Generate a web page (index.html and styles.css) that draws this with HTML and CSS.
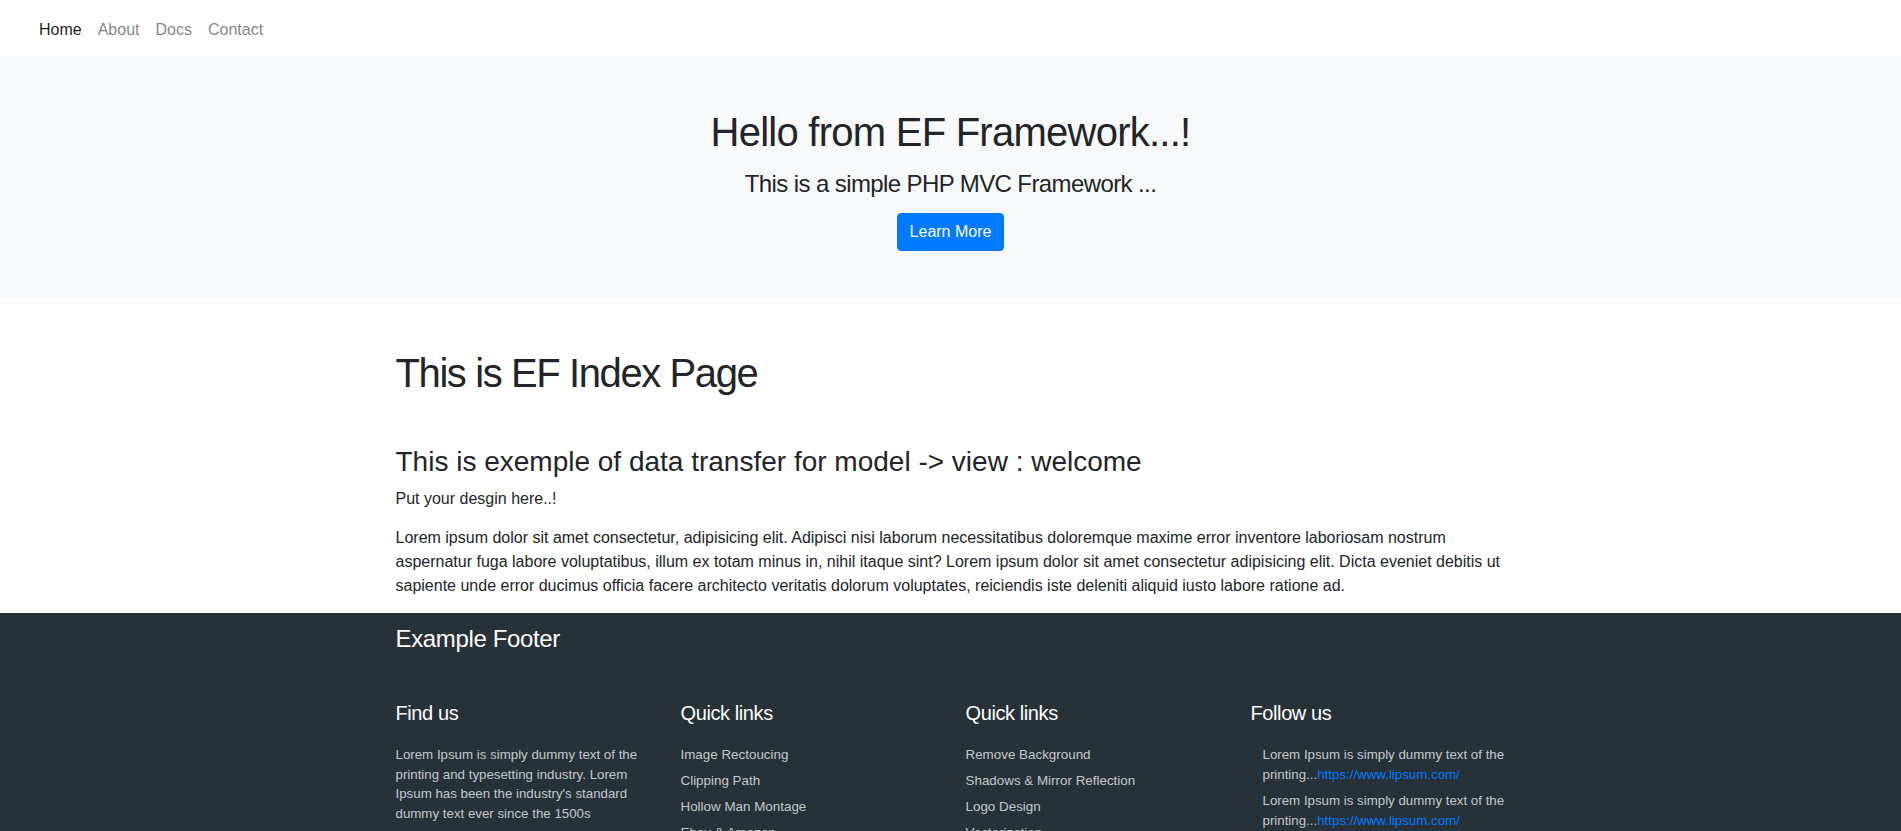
FILE: index.html
```html
<!DOCTYPE html>
<html lang="en">
<head>
<meta charset="utf-8">
<title>EF Framework</title>
<link rel="stylesheet" href="styles.css">
</head>
<body>
<nav class="navbar">
  <div class="navbar-inner">
    <ul class="nav">
      <li><a class="nav-link active" href="#">Home</a></li>
      <li><a class="nav-link" href="#">About</a></li>
      <li><a class="nav-link" href="#">Docs</a></li>
      <li><a class="nav-link" href="#">Contact</a></li>
    </ul>
  </div>
</nav>

<section class="hero">
  <h1 class="hero-title">Hello from EF Framework...!</h1>
  <p class="hero-lead">This is a simple PHP MVC Framework ...</p>
  <a class="btn" href="#">Learn More</a>
</section>

<main class="container">
  <h1 class="page-title">This is EF Index Page</h1>
  <h3 class="section-title">This is exemple of data transfer for model -&gt; view : welcome</h3>
  <p class="intro">Put your desgin here..!</p>
  <p class="body-text">Lorem ipsum dolor sit amet consectetur, adipisicing elit. Adipisci nisi laborum necessitatibus doloremque maxime error inventore laboriosam nostrum aspernatur fuga labore voluptatibus, illum ex totam minus in, nihil itaque sint? Lorem ipsum dolor sit amet consectetur adipisicing elit. Dicta eveniet debitis ut sapiente unde error ducimus officia facere architecto veritatis dolorum voluptates, reiciendis iste deleniti aliquid iusto labore ratione ad.</p>
</main>

<footer class="footer">
  <div class="container">
    <h4 class="footer-title">Example Footer</h4>
    <div class="footer-grid">
      <div class="footer-col">
        <h5 class="col-title">Find us</h5>
        <p class="col-text">Lorem Ipsum is simply dummy text of the printing and typesetting industry. Lorem Ipsum has been the industry's standard dummy text ever since the 1500s</p>
      </div>
      <div class="footer-col">
        <h5 class="col-title">Quick links</h5>
        <ul class="links">
          <li><a href="#">Image Rectoucing</a></li>
          <li><a href="#">Clipping Path</a></li>
          <li><a href="#">Hollow Man Montage</a></li>
          <li><a href="#">Ebay &amp; Amazon</a></li>
          <li><a href="#">Hair Masking/Clipping</a></li>
        </ul>
      </div>
      <div class="footer-col">
        <h5 class="col-title">Quick links</h5>
        <ul class="links">
          <li><a href="#">Remove Background</a></li>
          <li><a href="#">Shadows &amp; Mirror Reflection</a></li>
          <li><a href="#">Logo Design</a></li>
          <li><a href="#">Vectorization</a></li>
          <li><a href="#">Hair Masking/Clipping</a></li>
        </ul>
      </div>
      <div class="footer-col">
        <h5 class="col-title">Follow us</h5>
        <ul class="follow">
          <li>Lorem Ipsum is simply dummy text of the printing...<a href="#">https://www.lipsum.com/</a></li>
          <li>Lorem Ipsum is simply dummy text of the printing...<a href="#">https://www.lipsum.com/</a></li>
        </ul>
      </div>
    </div>
  </div>
</footer>
</body>
</html>
```

FILE: styles.css
```css
* { box-sizing: border-box; }

html, body {
  margin: 0;
  padding: 0;
}

body {
  font-family: "Liberation Sans", Arial, sans-serif;
  font-size: 16px;
  line-height: 1.5;
  color: #212529;
  background: #fff;
}

h1, h3, h4, h5, p, ul { margin: 0; }
h1, h3, h4, h5 { font-weight: 400; line-height: 1.2; }

a { text-decoration: none; }

/* Navbar */
.navbar {
  height: 56px;
  padding: 8px 16px;
}
.navbar-inner { padding: 0 15px; }
.nav {
  display: flex;
  list-style: none;
  padding: 0;
}
.nav-link {
  display: block;
  padding: 10px 8px 6px;
  line-height: 24px;
  color: rgba(0, 0, 0, 0.5);
}
.nav-link.active { color: rgba(0, 0, 0, 0.9); }

/* Hero */
.hero {
  background: #f8f9fa;
  height: 242px;
  padding: 52px 0 0;
  display: flex;
  flex-direction: column;
  align-items: center;
}
.hero-title {
  font-size: 40px;
  line-height: 48px;
  letter-spacing: -0.75px;
  margin-bottom: 14px;
}
.hero-lead {
  font-size: 24px;
  line-height: 28.8px;
  letter-spacing: -0.6px;
  margin-bottom: 14px;
}
.btn {
  display: inline-block;
  height: 38px;
  padding: 6px 12px;
  border: 1px solid #007bff;
  border-radius: 4px;
  background: #007bff;
  color: #fff;
  font-size: 16px;
  line-height: 24px;
}

/* Main */
.container {
  width: 1140px;
  margin: 0 auto;
  padding: 0 15px;
}
.page-title {
  font-size: 40px;
  line-height: 48px;
  letter-spacing: -1.4px;
  margin: 51px 0 48px;
}
.section-title {
  font-size: 28px;
  line-height: 33.6px;
  margin-bottom: 8px;
}
.intro { margin-bottom: 15px; }
.body-text { margin-bottom: 15px; }

/* Footer */
.footer {
  background: #263238;
  padding-top: 12px;
  min-height: 230px;
}
.footer-title {
  color: #fff;
  font-size: 24px;
  line-height: 28.8px;
  letter-spacing: -0.35px;
  margin-bottom: 48px;
}
.footer-grid {
  display: grid;
  grid-template-columns: repeat(4, 1fr);
  column-gap: 30px;
}
.col-title {
  color: #fff;
  font-size: 20px;
  line-height: 24px;
  letter-spacing: -0.4px;
  margin-bottom: 20px;
}
.col-text {
  color: #c3c8cc;
  font-size: 13.3px;
  line-height: 19.5px;
}
.links {
  list-style: none;
  padding: 0;
  font-size: 13.4px;
  line-height: 19.5px;
}
.links li { margin-bottom: 6.5px; }
.links a { color: #c3c8cc; }
.follow {
  list-style: none;
  padding: 0 0 0 12px;
  font-size: 13.3px;
  line-height: 19.5px;
  color: #c3c8cc;
}
.follow li { margin-bottom: 7px; }
.follow a { color: #007bff; }
```
